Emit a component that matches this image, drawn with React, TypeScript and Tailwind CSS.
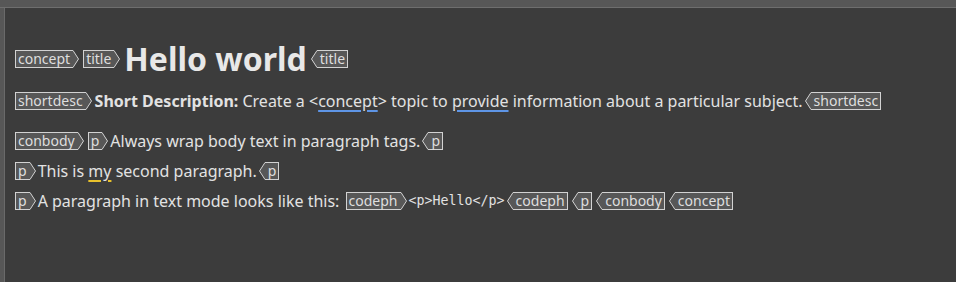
import React from "react";

function StartTag({ name }: { name: string }) {
  return (
    <span className="inline-flex h-[18px] shrink-0 mx-[2px] items-stretch">
      <span className="flex items-center border border-r-0 border-[#d2d2d2] bg-[#575757] pl-[2px] pr-[3px] text-[14px] leading-[16px] text-[#dedede] [font-family:'Noto_Sans',sans-serif]">
        {name}
      </span>
      <svg width="6" height="18" viewBox="0 0 6 18" className="block">
        <polygon points="0,0.5 5.5,9 0,17.5" fill="#575757" />
        <polyline points="0,0.5 5.5,9 0,17.5" fill="none" stroke="#d2d2d2" strokeWidth="1" />
      </svg>
    </span>
  );
}

function EndTag({ name }: { name: string }) {
  return (
    <span className="inline-flex h-[18px] shrink-0 mx-[2px] items-stretch">
      <svg width="6" height="18" viewBox="0 0 6 18" className="block">
        <polygon points="6,0.5 0.5,9 6,17.5" fill="#575757" />
        <polyline points="6,0.5 0.5,9 6,17.5" fill="none" stroke="#d2d2d2" strokeWidth="1" />
      </svg>
      <span className="flex items-center border border-l-0 border-[#d2d2d2] bg-[#575757] pl-[3px] pr-[2px] text-[14px] leading-[16px] text-[#dedede] [font-family:'Noto_Sans',sans-serif]">
        {name}
      </span>
    </span>
  );
}

export default function App() {
  return (
    <div className="w-[956px] h-[282px] bg-[#3c3c3c] flex flex-col overflow-hidden">
      <div className="h-[8px] shrink-0 bg-[#575757] border-b border-[#6e6e6e]" />
      <div className="flex flex-1">
        <div className="w-[5px] shrink-0 bg-[#575757] border-r border-[#6a6a6a]" />
        <div className="flex-1 pl-[8px] pt-[30px] text-[#e2e2e2] [font-family:'Noto_Sans',sans-serif] text-[16px] whitespace-pre">
          <div className="flex items-center h-[42px]">
            <StartTag name="concept" />
            <StartTag name="title" />
            <span className="mx-[2px] text-[32px] font-bold leading-[40px] text-[#e8e8e8]">
              Hello world
            </span>
            <EndTag name="title" />
          </div>
          <div className="flex items-center h-[42px]">
            <StartTag name="shortdesc" />
            <span className="ml-[1px]">
              <b>Short Description:</b> Create a &lt;
              <span className="underline decoration-[#5e95e6] decoration-2 underline-offset-[3px]">concept</span>
              &gt; topic to{" "}
              <span className="underline decoration-[#5e95e6] decoration-2 underline-offset-[3px]">provide</span>
              {" "}information about a particular subject.
            </span>
            <EndTag name="shortdesc" />
          </div>
          <div className="h-[4px]" />
          <div className="flex items-center h-[30px]">
            <StartTag name="conbody" />
            <StartTag name="p" />
            <span>Always wrap body text in paragraph tags.</span>
            <EndTag name="p" />
          </div>
          <div className="flex items-center h-[30px]">
            <StartTag name="p" />
            <span>
              This is{" "}
              <span className="underline decoration-[#e8c12c] decoration-2 underline-offset-[3px]">my</span>
              {" "}second paragraph.
            </span>
            <EndTag name="p" />
          </div>
          <div className="flex items-center h-[30px]">
            <StartTag name="p" />
            <span>A paragraph in text mode looks like this: </span>
            <StartTag name="codeph" />
            <span className="text-[13.3px] [font-family:'DejaVu_Sans_Mono',monospace]">&lt;p&gt;Hello&lt;/p&gt;</span>
            <EndTag name="codeph" />
            <EndTag name="p" />
            <EndTag name="conbody" />
            <EndTag name="concept" />
          </div>
        </div>
      </div>
    </div>
  );
}
